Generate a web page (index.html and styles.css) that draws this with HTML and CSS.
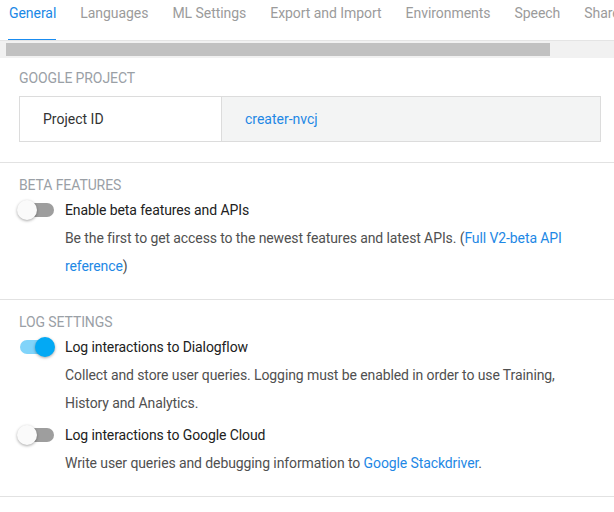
FILE: index.html
```html
<!DOCTYPE html>
<html>
<head>
<meta charset="utf-8">
<link rel="stylesheet" href="styles.css">
</head>
<body>
<div class="tabs">
  <div class="tab active">General</div>
  <div class="tab">Languages</div>
  <div class="tab">ML Settings</div>
  <div class="tab">Export and Import</div>
  <div class="tab">Environments</div>
  <div class="tab">Speech</div>
  <div class="tab">Share</div>
</div>
<div class="scrollbar"><div class="thumb"></div></div>

<section class="section first">
  <div class="heading">GOOGLE PROJECT</div>
  <div class="project-table">
    <div class="cell label-cell">Project ID</div>
    <div class="cell value-cell">creater-nvcj</div>
  </div>
</section>

<section class="section">
  <div class="heading">BETA FEATURES</div>
  <div class="item">
    <div class="toggle"><span class="track"></span><span class="knob"></span></div>
    <div class="text">
      <div class="label">Enable beta features and APIs</div>
      <div class="desc">Be the first to get access to the newest features and latest APIs. (<a class="link">Full V2-beta API reference</a>)</div>
    </div>
  </div>
</section>

<section class="section">
  <div class="heading">LOG SETTINGS</div>
  <div class="item">
    <div class="toggle on"><span class="track"></span><span class="knob"></span></div>
    <div class="text">
      <div class="label">Log interactions to Dialogflow</div>
      <div class="desc">Collect and store user queries. Logging must be enabled in order to use Training, History and Analytics.</div>
    </div>
  </div>
  <div class="item next">
    <div class="toggle"><span class="track"></span><span class="knob"></span></div>
    <div class="text">
      <div class="label">Log interactions to Google Cloud</div>
      <div class="desc">Write user queries and debugging information to <a class="link">Google Stackdriver</a>.</div>
    </div>
  </div>
</section>
</body>
</html>
```

FILE: styles.css
```css
html, body {
  margin: 0;
  padding: 0;
  background: #ffffff;
  font-family: Roboto, "Noto Sans", sans-serif;
  width: 614px;
  overflow: hidden;
}

.tabs {
  display: flex;
  gap: 24px;
  padding-left: 9px;
  height: 40px;
  border-bottom: 1px solid #e4e4e4;
  white-space: nowrap;
  overflow: hidden;
}

.tab {
  position: relative;
  flex: none;
  font-size: 14px;
  line-height: 20px;
  padding-top: 3px;
  letter-spacing: -0.05px;
  color: #9b9b9b;
}

.tab.active {
  color: #1a88e6;
}

.tab.active::after {
  content: "";
  position: absolute;
  left: -1px;
  right: 0;
  bottom: -1px;
  height: 2px;
  background: #1a8cf0;
}

.scrollbar {
  height: 17px;
  background: #f1f1f1;
  padding-top: 2px;
  box-sizing: border-box;
}

.thumb {
  margin-left: 6px;
  width: 544px;
  height: 13px;
  background: #c1c1c1;
}

.section {
  padding: 14px 13px 19px 19px;
  border-bottom: 1px solid #e2e2e2;
}

.section.first {
  padding-top: 12px;
  padding-bottom: 20px;
}

.heading {
  font-size: 14px;
  line-height: 16px;
  letter-spacing: -0.1px;
  color: #9aa0a6;
}

.project-table {
  display: flex;
  margin-top: 10px;
  height: 46px;
  box-sizing: border-box;
  border: 1px solid #dcdcdc;
  font-size: 14px;
}

.cell {
  display: flex;
  align-items: center;
  padding-left: 23px;
}

.label-cell {
  width: 178px;
  border-right: 1px solid #dcdcdc;
  color: #333333;
}

.value-cell {
  flex: 1;
  background: #f3f4f4;
  color: #1e88e5;
}

.item {
  display: flex;
  margin-top: 3px;
}

.item.next {
  margin-top: 4px;
}

.toggle {
  position: relative;
  flex: none;
  width: 46px;
  height: 28px;
}

.track {
  position: absolute;
  left: 1px;
  top: 7px;
  width: 34px;
  height: 14px;
  border-radius: 7px;
  background: #9e9e9e;
}

.knob {
  position: absolute;
  left: -2px;
  top: 4px;
  width: 20px;
  height: 20px;
  border-radius: 50%;
  background: #fafafa;
  box-shadow: 0 1px 3px rgba(0, 0, 0, 0.35);
}

.toggle.on .track {
  background: #81d4fa;
}

.toggle.on .knob {
  left: 16px;
  background: #03a9f4;
}

.text {
  flex: 1;
  font-size: 14px;
  line-height: 28px;
  letter-spacing: -0.1px;
}

.label {
  color: #212121;
}

.desc {
  color: #505050;
}

.link {
  color: #1e88e5;
  text-decoration: none;
}
```
